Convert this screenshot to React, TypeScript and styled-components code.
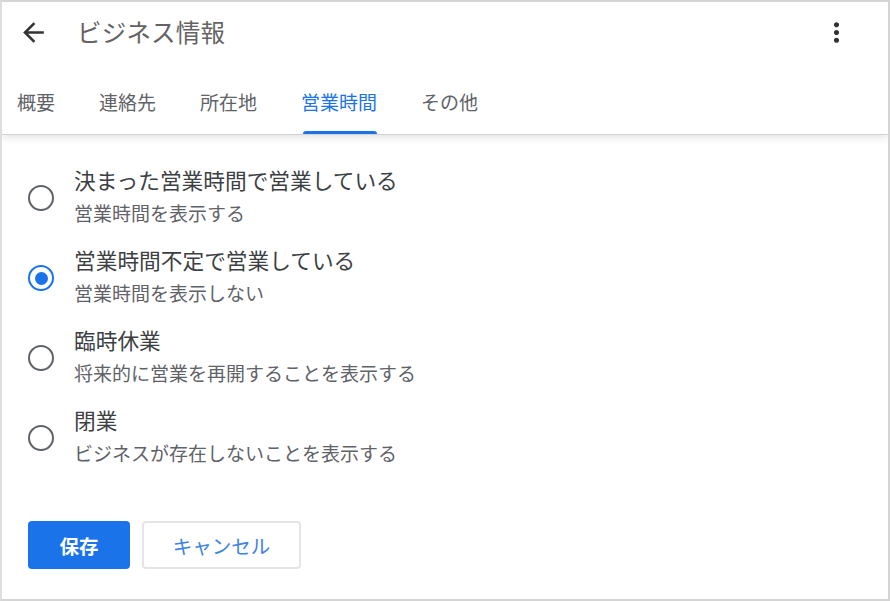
import React from 'react';
import styled, { createGlobalStyle } from 'styled-components';

const GlobalStyle = createGlobalStyle`
  html, body {
    margin: 0;
    padding: 0;
    background: #ffffff;
  }
  body {
    font-family: "Noto Sans CJK JP", "Noto Sans", Roboto, sans-serif;
  }
`;

const Frame = styled.div`
  width: 890px;
  height: 601px;
  box-sizing: border-box;
  border: 2px solid #d4d4d4;
  border-left-color: #dedede;
  background: #fff;
  display: flex;
  flex-direction: column;
  overflow: hidden;
`;

const Header = styled.header`
  position: relative;
  z-index: 1;
  background: #fff;
  border-bottom: 1px solid #d2d2d2;
  box-shadow: 0 2px 9px rgba(0, 0, 0, 0.13);
`;

const TopBar = styled.div`
  height: 60px;
  display: flex;
  align-items: center;
  padding: 0 36px 0 16px;
`;

const IconButton = styled.button`
  width: 31px;
  height: 31px;
  padding: 0;
  border: none;
  background: none;
  display: flex;
  align-items: center;
  justify-content: center;
  color: #333;
  cursor: pointer;
`;

const Title = styled.h1`
  margin: 0 0 0 28px;
  flex: 1;
  font-size: 24.5px;
  font-weight: 400;
  color: #646464;
  line-height: 1;
  letter-spacing: 0.2px;
`;

const TabBar = styled.nav`
  height: 72px;
  display: flex;
  gap: 44px;
  padding-left: 15px;
`;

const Tab = styled.div<{ $active?: boolean }>`
  position: relative;
  padding-top: 29px;
  font-size: 19px;
  line-height: 22px;
  color: ${(p) => (p.$active ? '#1a73e8' : '#5f6368')};
  cursor: pointer;

  &::after {
    content: '';
    display: ${(p) => (p.$active ? 'block' : 'none')};
    position: absolute;
    left: 2px;
    right: 0;
    bottom: 0;
    height: 3px;
    border-radius: 3px 3px 0 0;
    background: #1a73e8;
  }
`;

const Content = styled.main`
  padding: 29px 0 0 26px;
  display: flex;
  flex-direction: column;
`;

const OptionList = styled.div`
  display: flex;
  flex-direction: column;
  gap: 14px;
`;

const OptionRow = styled.label`
  height: 66px;
  display: flex;
  align-items: center;
  gap: 20px;
  cursor: pointer;
`;

const Radio = styled.span<{ $checked?: boolean }>`
  width: 26px;
  height: 26px;
  box-sizing: border-box;
  border-radius: 50%;
  border: 2.6px solid ${(p) => (p.$checked ? '#1a73e8' : '#5f6368')};
  display: flex;
  align-items: center;
  justify-content: center;
  flex-shrink: 0;
  margin-top: 2px;

  &::before {
    content: '';
    display: ${(p) => (p.$checked ? 'block' : 'none')};
    width: 13px;
    height: 13px;
    border-radius: 50%;
    background: #1a73e8;
  }
`;

const OptionText = styled.div`
  display: flex;
  flex-direction: column;
`;

const OptionLabel = styled.div`
  font-size: 21.7px;
  line-height: 32px;
  color: #3c4043;
`;

const OptionSub = styled.div`
  font-size: 19px;
  line-height: 34px;
  color: #5f6368;
`;

const Actions = styled.div`
  margin-top: 51px;
  display: flex;
  gap: 12px;
`;

const Button = styled.button<{ $primary?: boolean }>`
  height: 48px;
  box-sizing: border-box;
  border-radius: 4px;
  font-family: inherit;
  font-size: 19.5px;
  cursor: pointer;
  border: ${(p) => (p.$primary ? 'none' : '2px solid #e3e5e8')};
  background: ${(p) => (p.$primary ? '#1a73e8' : '#fff')};
  color: ${(p) => (p.$primary ? '#fff' : '#3d82e6')};
  font-weight: ${(p) => (p.$primary ? 700 : 400)};
  width: ${(p) => (p.$primary ? '102px' : '159px')};
`;

const ArrowBack = () => (
  <svg width='31' height='31' viewBox='0 0 24 24' fill='currentColor'>
    <path d='M20 11H7.83l5.59-5.59L12 4l-8 8 8 8 1.41-1.41L7.83 13H20v-2z' />
  </svg>
);

const MoreVert = () => (
  <svg width='31' height='31' viewBox='0 0 24 24' fill='currentColor'>
    <path d='M12 8c1.1 0 2-.9 2-2s-.9-2-2-2-2 .9-2 2 .9 2 2 2zm0 2c-1.1 0-2 .9-2 2s.9 2 2 2 2-.9 2-2-.9-2-2-2zm0 6c-1.1 0-2 .9-2 2s.9 2 2 2 2-.9 2-2-.9-2-2-2z' />
  </svg>
);

const tabs = ['概要', '連絡先', '所在地', '営業時間', 'その他'];

const options = [
  { label: '決まった営業時間で営業している', sub: '営業時間を表示する' },
  { label: '営業時間不定で営業している', sub: '営業時間を表示しない' },
  { label: '臨時休業', sub: '将来的に営業を再開することを表示する' },
  { label: '閉業', sub: 'ビジネスが存在しないことを表示する' },
];

const App = () => {
  const [tab, setTab] = React.useState(3);
  const [selected, setSelected] = React.useState(1);

  return (
    <>
      <GlobalStyle />
      <Frame>
        <Header>
          <TopBar>
            <IconButton aria-label='戻る'>
              <ArrowBack />
            </IconButton>
            <Title>ビジネス情報</Title>
            <IconButton aria-label='その他のオプション'>
              <MoreVert />
            </IconButton>
          </TopBar>
          <TabBar>
            {tabs.map((t, i) => (
              <Tab key={t} $active={i === tab} onClick={() => setTab(i)}>
                {t}
              </Tab>
            ))}
          </TabBar>
        </Header>
        <Content>
          <OptionList>
            {options.map((o, i) => (
              <OptionRow key={o.label} onClick={() => setSelected(i)}>
                <Radio $checked={i === selected} />
                <OptionText>
                  <OptionLabel>{o.label}</OptionLabel>
                  <OptionSub>{o.sub}</OptionSub>
                </OptionText>
              </OptionRow>
            ))}
          </OptionList>
          <Actions>
            <Button $primary>保存</Button>
            <Button>キャンセル</Button>
          </Actions>
        </Content>
      </Frame>
    </>
  );
};

export default App;
